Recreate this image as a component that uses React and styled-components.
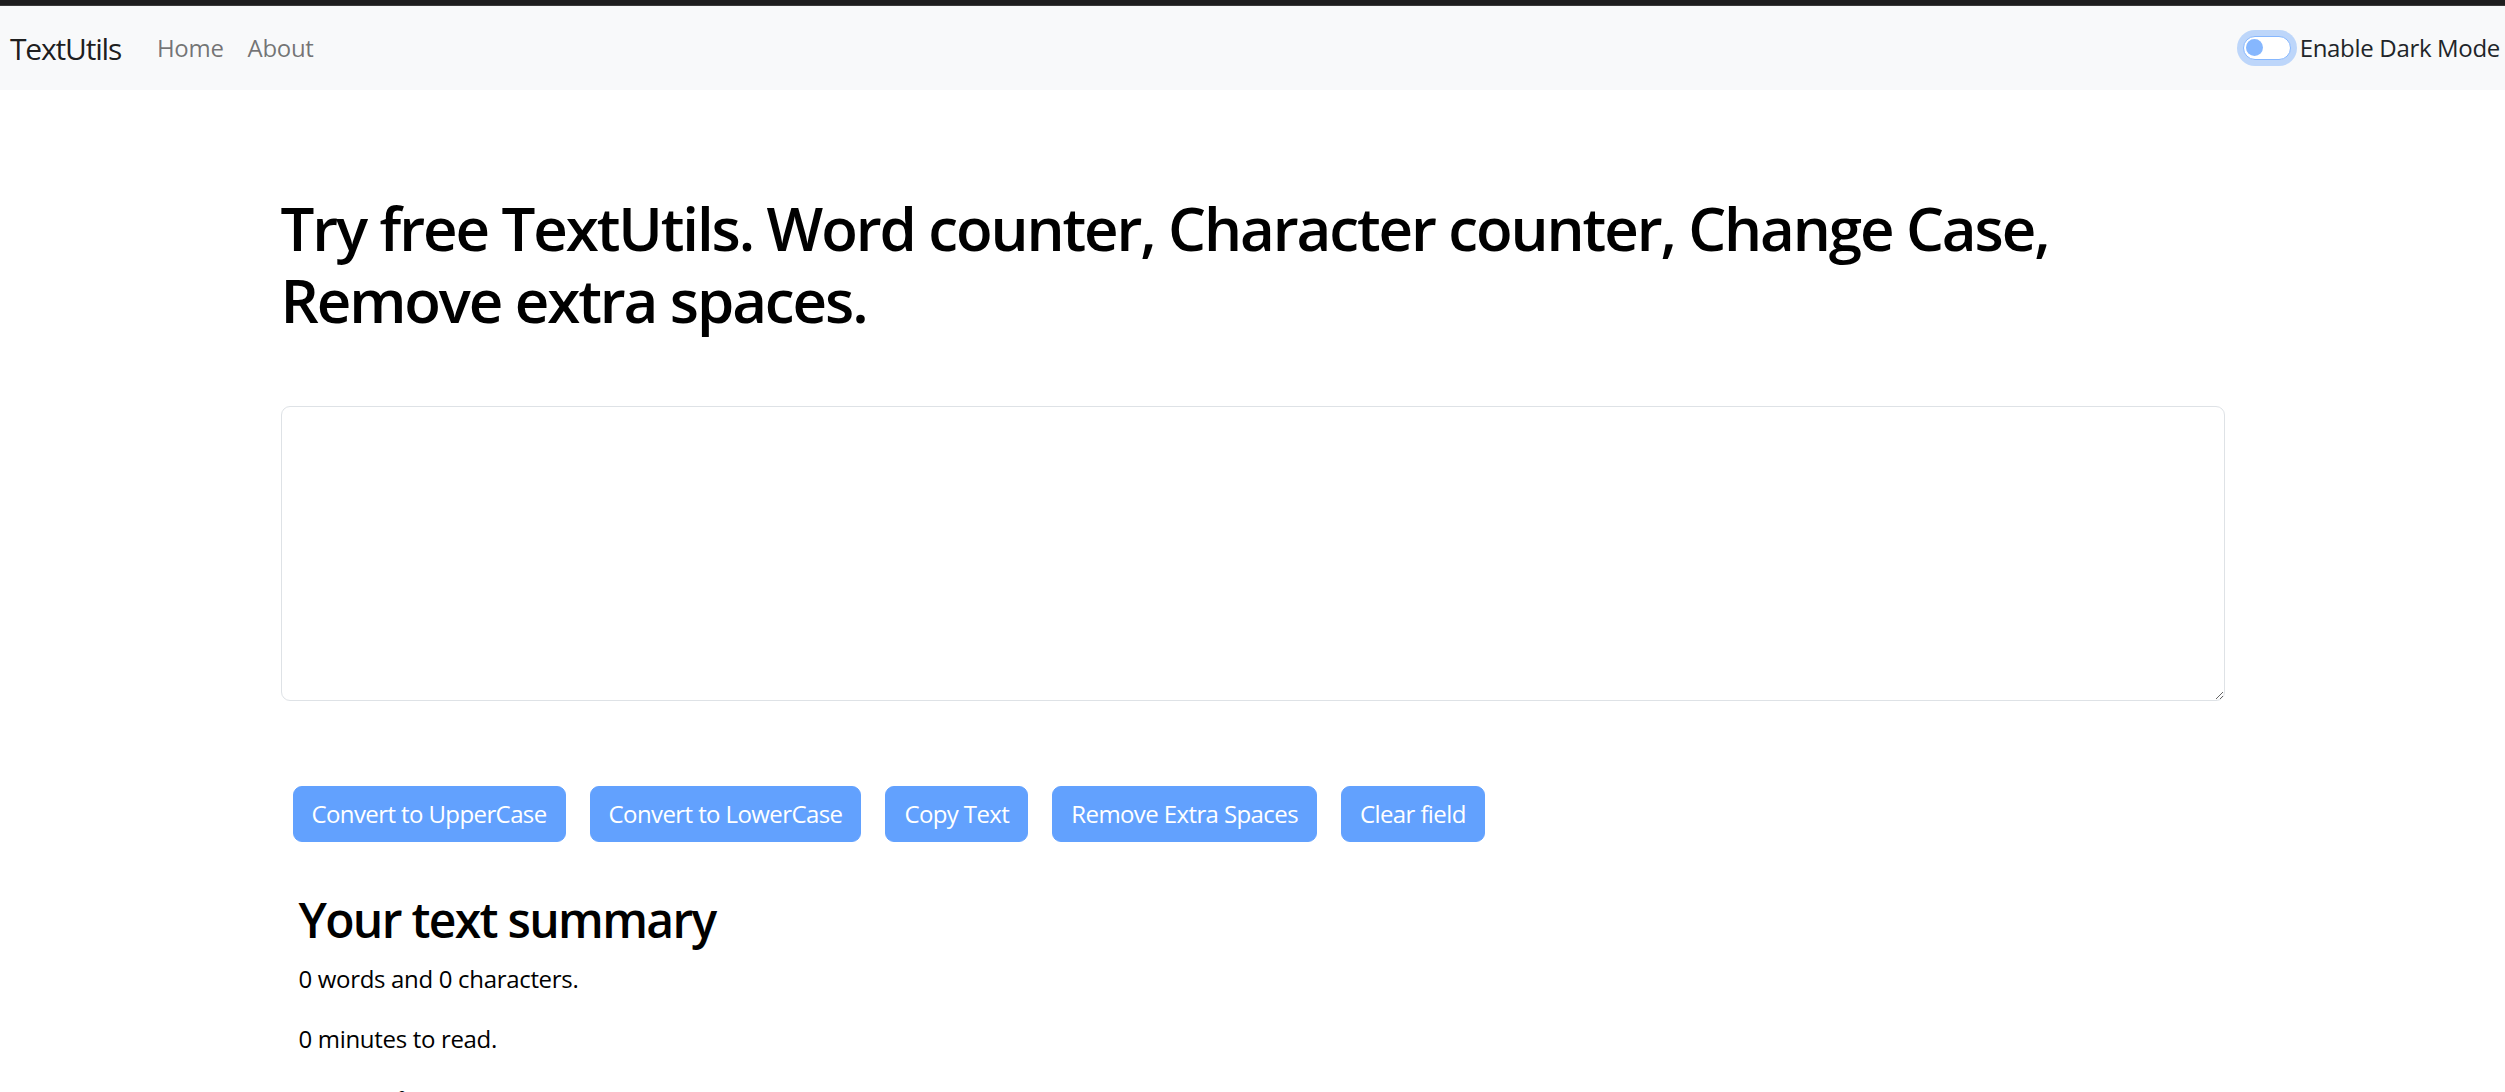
import React, { useState } from "react";
import styled, { createGlobalStyle } from "styled-components";

const GlobalStyle = createGlobalStyle`
  * {
    box-sizing: border-box;
  }
  body {
    margin: 0;
    background: #fff;
    color: #212529;
    font-family: "Open Sans", "Noto Sans", sans-serif;
    letter-spacing: -0.02em;
  }
`;

const TopStrip = styled.div`
  height: 6px;
  background: #1e1e1e;
  border-bottom: 1px solid #3a3a3a;
`;

const NavbarStyles = styled.nav`
  display: flex;
  align-items: center;
  justify-content: space-between;
  height: 84px;
  padding: 0 5px 0 10px;
  background: #f8f9fa;

  .nav {
    &-left {
      display: flex;
      align-items: center;
    }
    &-brand {
      font-size: 30px;
      line-height: 45px;
      letter-spacing: -0.04em;
      color: rgba(0, 0, 0, 0.9);
      margin-right: 24px;
      text-decoration: none;
    }
    &-link {
      font-size: 24px;
      line-height: 36px;
      padding: 0 12px;
      color: rgba(0, 0, 0, 0.55);
      text-decoration: none;
      &:first-of-type {
        padding-left: 0;
      }
    }
  }
`;

const SwitchWrap = styled.label`
  display: flex;
  align-items: center;
  gap: 9px;
  font-size: 24px;
  line-height: 36px;
  color: #212529;
  cursor: pointer;
`;

const SwitchTrack = styled.span`
  position: relative;
  display: inline-block;
  width: 48px;
  height: 24px;
  border-radius: 12px;
  border: 1.5px solid #86b7fe;
  background: ${(p) => (p.$on ? "#0d6efd" : "#fff")};
  box-shadow: 0 0 0 6px rgba(13, 110, 253, 0.25);

  &::after {
    content: "";
    position: absolute;
    top: 2px;
    left: ${(p) => (p.$on ? "26px" : "2px")};
    width: 17px;
    height: 17px;
    border-radius: 50%;
    background: ${(p) => (p.$on ? "#fff" : "#86b7fe")};
  }
`;

const Container = styled.main`
  max-width: 1980px;
  margin: 0 auto;
  padding: 102px 18px 0;
`;

const Heading = styled.h1`
  margin: 0;
  font-size: 60px;
  line-height: 72px;
  font-weight: 600;
  letter-spacing: -0.035em;
  color: #000;
`;

const TextBox = styled.textarea`
  display: block;
  width: 100%;
  height: 295px;
  margin-top: 70px;
  padding: 9px 18px;
  font-family: inherit;
  font-size: 24px;
  line-height: 36px;
  color: #212529;
  border: 1.5px solid #dee2e6;
  border-radius: 9px;
  outline: none;
  resize: vertical;
`;

const ButtonRow = styled.div`
  display: flex;
  flex-wrap: wrap;
  gap: 24px;
  margin-top: 85px;
  padding-left: 12px;
`;

const Button = styled.button`
  padding: 9px 18px;
  font-family: inherit;
  font-size: 24px;
  line-height: 36px;
  letter-spacing: -0.025em;
  color: #fff;
  background: rgb(98, 161, 254);
  border: 1.5px solid rgb(98, 161, 254);
  border-radius: 9px;
  cursor: default;
`;

const Summary = styled.section`
  margin-top: 49px;
  padding: 0 18px;

  h2 {
    margin: 0 0 12px;
    font-size: 48px;
    line-height: 57.6px;
    font-weight: 600;
    letter-spacing: -0.035em;
    color: #000;
  }
  p {
    margin: 0 0 24px;
    font-size: 24px;
    line-height: 36px;
    color: #000;
  }
`;

const buttons = [
  "Convert to UpperCase",
  "Convert to LowerCase",
  "Copy Text",
  "Remove Extra Spaces",
  "Clear field",
];

const App = () => {
  const [dark, setDark] = useState(false);
  const [text, setText] = useState("");
  const words = text.split(/\s+/).filter((w) => w.length).length;

  return (
    <>
      <GlobalStyle />
      <TopStrip />
      <NavbarStyles>
        <div className="nav-left">
          <a className="nav-brand" href="#">
            TextUtils
          </a>
          <a className="nav-link" href="#">
            Home
          </a>
          <a className="nav-link" href="#">
            About
          </a>
        </div>
        <SwitchWrap onClick={() => setDark(!dark)}>
          <SwitchTrack $on={dark} />
          Enable Dark Mode
        </SwitchWrap>
      </NavbarStyles>
      <Container>
        <Heading>
          Try free TextUtils. Word counter, Character counter, Change Case,
          Remove extra spaces.
        </Heading>
        <TextBox value={text} onChange={(e) => setText(e.target.value)} />
        <ButtonRow>
          {buttons.map((b) => (
            <Button key={b} disabled={!text.length}>
              {b}
            </Button>
          ))}
        </ButtonRow>
        <Summary>
          <h2>Your text summary</h2>
          <p>
            {words} words and {text.length} characters.
          </p>
          <p>{0.008 * words} minutes to read.</p>
          <h2>Preview</h2>
          <p>{text || "Nothing to preview!"}</p>
        </Summary>
      </Container>
    </>
  );
};

export default App;
